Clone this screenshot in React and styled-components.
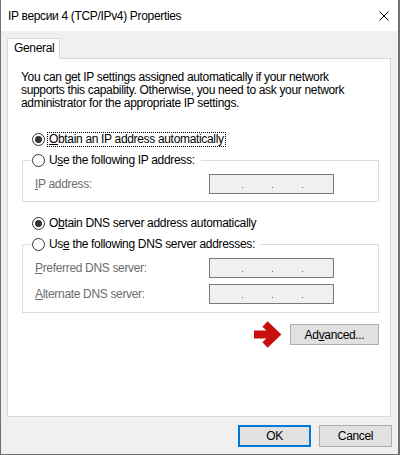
import React from "react";
import styled, { createGlobalStyle } from "styled-components";

const GlobalStyle = createGlobalStyle`
  html, body { margin: 0; padding: 0; }
  body {
    background: #5a5a5a;
    font-family: "Liberation Sans", Arial, sans-serif;
    font-size: 12px;
    letter-spacing: -0.33px;
    color: #000;
  }
  * { box-sizing: border-box; }
`;

const Window = styled.div`
  width: 400px;
  height: 455px;
  border-left: 1px solid #707070;
  border-right: 2px solid #707070;
  border-bottom: 1px solid #707070;
  background: #f0f0f0;
  display: flex;
  flex-direction: column;
`;

const TitleBar = styled.div`
  height: 31px;
  background: #fff;
  display: flex;
  align-items: center;
  justify-content: space-between;
  padding: 0 9px 0 7px;
  font-size: 12px;
`;

const Body = styled.div`
  padding: 7px 6px 0 6px;
  display: flex;
  flex-direction: column;
`;

const Tab = styled.div`
  width: 53px;
  height: 21px;
  border: 1px solid #d9d9d9;
  border-bottom: none;
  background: #fff;
  margin-bottom: -1px;
  position: relative;
  z-index: 1;
  padding-left: 6px;
  line-height: 19px;
`;

const Panel = styled.div`
  width: 384px;
  height: 359px;
  border: 1px solid #d9d9d9;
  background: #fff;
  padding: 12px 11px 0 13px;
  display: flex;
  flex-direction: column;
`;

const Description = styled.div`
  line-height: 13px;
`;

const RadioRow = styled.div`
  display: flex;
  align-items: center;
  height: 14px;
  margin-top: ${(p) => p.$mt || 0}px;
  padding-left: 11px;
`;

const Radio = styled.span`
  width: 13px;
  height: 13px;
  border-radius: 50%;
  border: 1px solid #333;
  background: #fff;
  display: inline-flex;
  align-items: center;
  justify-content: center;
  flex: none;
  &::after {
    content: "";
    width: 7px;
    height: 7px;
    border-radius: 50%;
    background: ${(p) => (p.$checked ? "#333" : "transparent")};
  }
`;

const RadioLabel = styled.span`
  margin-left: 2px;
  padding: 0 1px;
  line-height: 13px;
  border: 1px dotted ${(p) => (p.$focused ? "#000" : "transparent")};
  white-space: nowrap;
`;

const Group = styled.fieldset`
  margin: ${(p) => p.$mt}px 0 0 1px;
  padding: 0 0 ${(p) => p.$pb}px 0;
  border: 1px solid #dcdcdc;
  min-width: 0;
`;

const Legend = styled.legend`
  margin-left: 8px;
  padding: 0 4px 0 1px;
  display: flex;
  align-items: center;
  height: 14px;
`;

const FieldRow = styled.div`
  display: flex;
  align-items: center;
  height: 20px;
  padding-left: 12px;
  margin-top: ${(p) => p.$mt}px;
`;

const FieldLabel = styled.span`
  width: 174px;
  color: #6d6d6d;
  white-space: nowrap;
`;

const IpBox = styled.div`
  width: 125px;
  height: 20px;
  border: 1px solid #7a7a7a;
  background: #f0f0f0;
  display: flex;
  align-items: flex-start;
  padding-left: 32px;
`;

const IpDot = styled.span`
  width: 1px;
  height: 1px;
  background: #6d6d6d;
  margin-top: 12px;
  margin-right: 29px;
`;

const AdvancedRow = styled.div`
  display: flex;
  justify-content: flex-end;
  align-items: center;
  gap: 8px;
  margin-top: 8px;
`;

const Button = styled.button`
  width: ${(p) => p.$w}px;
  height: ${(p) => p.$h}px;
  background: #e1e1e1;
  border: ${(p) => (p.$default ? "2px solid #0078d7" : "1px solid #adadad")};
  font-family: "Liberation Sans", Arial, sans-serif;
  font-size: 12px;
  letter-spacing: -0.33px;
  color: #000;
  padding: 0;
  display: flex;
  align-items: center;
  justify-content: center;
`;

const Footer = styled.div`
  display: flex;
  justify-content: flex-end;
  gap: 8px;
  margin-top: 8px;
`;

const IpField = () => (
  <IpBox>
    <IpDot />
    <IpDot />
    <IpDot />
  </IpBox>
);

export default function App() {
  return (
    <>
      <GlobalStyle />
      <Window>
        <TitleBar>
          <span>IP версии 4 (TCP/IPv4) Properties</span>
          <svg width="10" height="10" viewBox="0 0 10 10">
            <path d="M0.5 0.5 L9.5 9.5 M9.5 0.5 L0.5 9.5" stroke="#000" strokeWidth="1" fill="none" />
          </svg>
        </TitleBar>
        <Body>
          <Tab>General</Tab>
          <Panel>
            <Description>
              You can get IP settings assigned automatically if your network
              <br />
              supports this capability. Otherwise, you need to ask your network
              <br />
              administrator for the appropriate IP settings.
            </Description>

            <RadioRow $mt={22}>
              <Radio $checked />
              <RadioLabel $focused>
                <u>O</u>btain an IP address automatically
              </RadioLabel>
            </RadioRow>

            <Group $mt={7} $pb={7}>
              <Legend>
                <Radio />
                <RadioLabel>
                  U<u>s</u>e the following IP address:
                </RadioLabel>
              </Legend>
              <FieldRow $mt={7}>
                <FieldLabel>
                  <u>I</u>P address:
                </FieldLabel>
                <IpField />
              </FieldRow>
            </Group>

            <RadioRow $mt={14}>
              <Radio $checked />
              <RadioLabel>
                O<u>b</u>tain DNS server address automatically
              </RadioLabel>
            </RadioRow>

            <Group $mt={7} $pb={8}>
              <Legend>
                <Radio />
                <RadioLabel>
                  Us<u>e</u> the following DNS server addresses:
                </RadioLabel>
              </Legend>
              <FieldRow $mt={7}>
                <FieldLabel>
                  <u>P</u>referred DNS server:
                </FieldLabel>
                <IpField />
              </FieldRow>
              <FieldRow $mt={6}>
                <FieldLabel>
                  <u>A</u>lternate DNS server:
                </FieldLabel>
                <IpField />
              </FieldRow>
            </Group>

            <AdvancedRow>
              <svg width="29" height="27" viewBox="0 0 29 27">
                <path d="M1 13.5 H20" stroke="#c8100e" strokeWidth="8" fill="none" />
                <path d="M12 3 L23 13.5 L12 24" stroke="#c8100e" strokeWidth="7.5" fill="none" strokeLinejoin="miter" />
              </svg>
              <Button $w={89} $h={21}>
                Ad<u>v</u>anced...
              </Button>
            </AdvancedRow>
          </Panel>
          <Footer>
            <Button $w={73} $h={22} $default>
              OK
            </Button>
            <Button $w={73} $h={22}>
              Cancel
            </Button>
          </Footer>
        </Body>
      </Window>
    </>
  );
}
